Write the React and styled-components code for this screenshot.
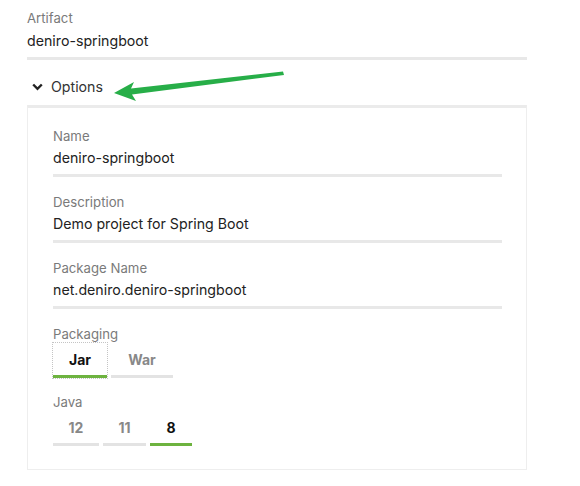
import React from "react";
import styled, { createGlobalStyle } from "styled-components";

const Global = createGlobalStyle`
  html, body { margin: 0; padding: 0; background: #fff; }
  body { font-family: Inter, "Noto Sans", sans-serif; -webkit-font-smoothing: antialiased; }
`;

const Page = styled.div`
  position: relative;
  width: 580px;
  height: 486px;
  box-sizing: border-box;
  padding: 9px 53px 0 27px;
`;

const Field = styled.div`
  padding-bottom: 5px;
  border-bottom: 3px solid #e8e8e8;
  margin-bottom: 16px;
`;

const Label = styled.div`
  font-size: 13.2px;
  line-height: 18px;
  color: #7a7a7a;
`;

const Value = styled.div`
  margin-top: ${(p) => (p.$tight ? 2 : 3)}px;
  font-size: 14.2px;
  line-height: 22px;
  color: #222;
`;

const Toggle = styled.div`
  display: flex;
  align-items: center;
  gap: 8px;
  margin: 16px 0 7px 5px;
  font-size: 14.2px;
  line-height: 22px;
  color: #333;
`;

const Panel = styled.div`
  border-top: 3px solid #ebebeb;
  border-left: 1px solid #eeeeee;
  border-right: 1px solid #eeeeee;
  border-bottom: 1px solid #eeeeee;
  padding: 19px 24px 23px 25px;
`;

const Group = styled.div`
  margin-bottom: ${(p) => (p.$last ? "0" : "15px")};
`;

const Radios = styled.div`
  display: flex;
  gap: 4px;
`;

const Radio = styled.div`
  box-sizing: border-box;
  width: ${(p) => p.$w}px;
  height: 35px;
  line-height: 33px;
  font-size: 14px;
  font-weight: 700;
  color: ${(p) => (p.$active ? "#111" : "#888")};
  border-bottom: 3px solid ${(p) => (p.$active ? "#6db33f" : "#e3e3e3")};
  outline: ${(p) => (p.$focus ? "1px dotted #c4c4c4" : "none")};
  text-align: center;
`;

const Arrow = styled.svg`
  position: absolute;
  left: 0;
  top: 0;
  pointer-events: none;
`;

const Chevron = () => (
  <svg width="11" height="8" viewBox="0 0 11 8">
    <polyline points="1.2,1.5 5.5,5.8 9.8,1.5" fill="none" stroke="#222" strokeWidth="2.4" />
  </svg>
);

export default function App() {
  return (
    <>
      <Global />
      <Page>
        <Field>
          <Label>Artifact</Label>
          <Value>deniro-springboot</Value>
        </Field>
        <Toggle>
          <Chevron />
          <span>Options</span>
        </Toggle>
        <Panel>
          <Field>
            <Label>Name</Label>
            <Value $tight>deniro-springboot</Value>
          </Field>
          <Field>
            <Label>Description</Label>
            <Value $tight>Demo project for Spring Boot</Value>
          </Field>
          <Field>
            <Label>Package Name</Label>
            <Value $tight>net.deniro.deniro-springboot</Value>
          </Field>
          <Group>
            <Label>Packaging</Label>
            <Radios>
              <Radio $active $focus $w={54}>Jar</Radio>
              <Radio $w={62}>War</Radio>
            </Radios>
          </Group>
          <Group $last>
            <Label>Java</Label>
            <Radios>
              <Radio $w={46}>12</Radio>
              <Radio $w={43}>11</Radio>
              <Radio $active $w={42}>8</Radio>
            </Radios>
          </Group>
        </Panel>
        <Arrow width="580" height="486" viewBox="0 0 580 486">
          <polygon
            points="114,93 134,82 131,88.5 283,71.5 284,75 132,94.5 136,101"
            fill="#27ae48"
          />
        </Arrow>
      </Page>
    </>
  );
}
